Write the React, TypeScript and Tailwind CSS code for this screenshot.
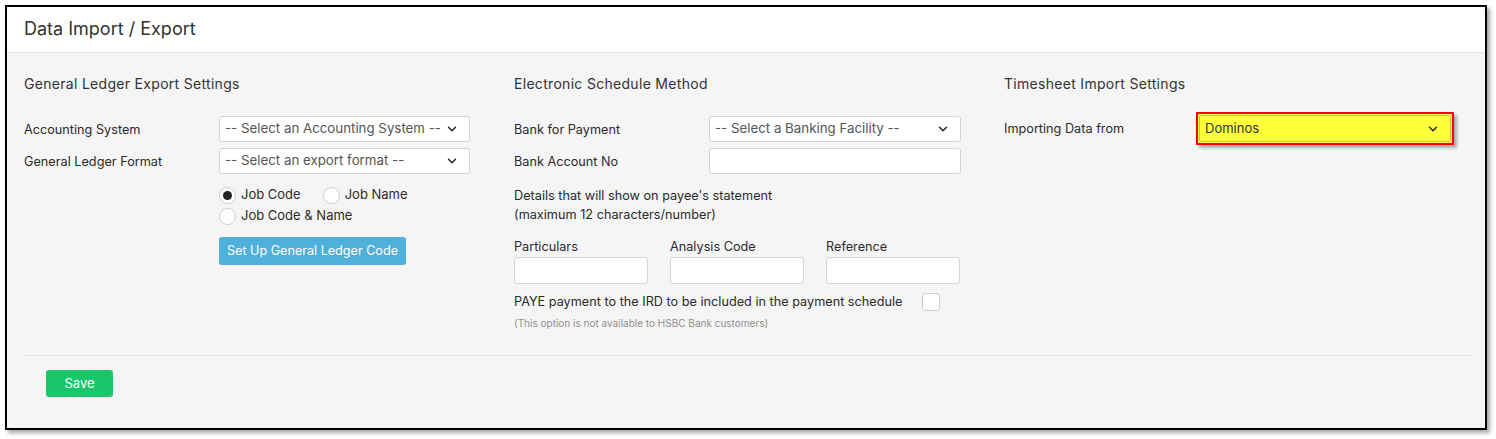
import { ChevronDown } from 'lucide-react';

const font = { fontFamily: 'Inter, "Noto Sans", sans-serif' };

function Select({ text, className = '' }: { text: string; className?: string }) {
  return (
    <div className={`flex h-[26px] items-center justify-between rounded-[3px] border border-[#d4d4d4] bg-white pl-[5px] pr-[10px] text-[13.3px] text-[#555] ${className}`}>
      <span>{text}</span>
      <ChevronDown size={14} strokeWidth={2.5} className="text-[#222]" />
    </div>
  );
}

function Radio({ checked, label }: { checked?: boolean; label: string }) {
  return (
    <label className="flex items-center gap-[5px] text-[13px] text-[#2b2b2b]">
      <span className="flex h-[17px] w-[17px] items-center justify-center rounded-full border border-[#cfcfcf] bg-white">
        {checked && <span className="h-[9px] w-[9px] rounded-full bg-[#222]" />}
      </span>
      {label}
    </label>
  );
}

export default function App() {
  return (
    <div className="h-[439px] w-[1496px] bg-white pl-[5px] pt-[5px]" style={font}>
      <div className="h-[425px] w-[1482px] border-2 border-black bg-[#f5f5f5] shadow-[3px_3px_4px_rgba(0,0,0,0.35)]">
        <header className="flex h-[46px] items-center border-b border-[#e3e3e3] bg-white px-[17px] pb-[2px]">
          <h1 className="text-[18px] text-[#333]">Data Import / Export</h1>
        </header>

        <section className="grid h-[302px] grid-cols-[490px_490px_480px] pl-[17px] pt-[21px] text-[12.7px] text-[#2b2b2b]">
          {/* General ledger */}
          <div>
            <h2 className="text-[14px] leading-5 tracking-[0.3px] text-[#333]">General Ledger Export Settings</h2>
            <div className="mt-[22px] flex items-center">
              <span className="w-[195px] pt-[1px]">Accounting System</span>
              <Select text="-- Select an Accounting System --" className="w-[251px]" />
            </div>
            <div className="mt-[6px] flex items-center">
              <span className="w-[195px] pt-[2px]">General Ledger Format</span>
              <Select text="-- Select an export format --" className="w-[251px]" />
            </div>
            <div className="ml-[195px] mt-[11px] flex flex-col gap-[1px]">
              <div className="flex h-5 items-center gap-[22px]">
                <Radio checked label="Job Code" />
                <Radio label="Job Name" />
              </div>
              <div className="flex h-5 items-center">
                <Radio label="Job Code & Name" />
              </div>
            </div>
            <button
              type="button"
              className="ml-[195px] mt-[11px] h-[28px] w-[187px] rounded-[3px] bg-[#4fb0dc] text-[12.6px] text-white"
            >
              Set Up General Ledger Code
            </button>
          </div>

          {/* Electronic schedule */}
          <div>
            <h2 className="text-[14px] leading-5 tracking-[0.3px] text-[#333]">Electronic Schedule Method</h2>
            <div className="mt-[22px] flex items-center">
              <span className="w-[195px] pt-[1px]">Bank for Payment</span>
              <Select text="-- Select a Banking Facility --" className="w-[252px]" />
            </div>
            <div className="mt-[6px] flex items-center">
              <span className="w-[195px] pt-[2px]">Bank Account No</span>
              <div className="h-[26px] w-[252px] rounded-[3px] border border-[#d4d4d4] bg-white" />
            </div>
            <p className="mt-[12px] leading-[19px]">
              Details that will show on payee's statement
              <br />
              (maximum 12 characters/number)
            </p>
            <div className="mt-[14px] flex gap-[22px]">
              {['Particulars', 'Analysis Code', 'Reference'].map((l) => (
                <div key={l} className="flex flex-col">
                  <span className="leading-[18px]">{l}</span>
                  <div className="mt-[1px] h-[27px] w-[134px] rounded-[3px] border border-[#d4d4d4] bg-white" />
                </div>
              ))}
            </div>
            <div className="mt-[8px] flex h-[19px] items-center">
              <span className="w-[408px]">PAYE payment to the IRD to be included in the payment schedule</span>
              <span className="h-[18px] w-[18px] rounded-[3px] border border-[#cfcfcf] bg-white" />
            </div>
            <p className="mt-[5px] text-[10px] leading-[14px] text-[#8f8f8f]">
              (This option is not available to HSBC Bank customers)
            </p>
          </div>

          {/* Timesheet */}
          <div>
            <h2 className="text-[14px] leading-5 tracking-[0.3px] text-[#333]">Timesheet Import Settings</h2>
            <div className="mt-[18px] flex items-center">
              <span className="w-[192px] pt-[1px]">Importing Data from</span>
              <div className="border-2 border-[#f00] bg-[#ffff3a] p-[1px] shadow-[3px_3px_3px_rgba(0,0,0,0.3)]">
                <div className="flex h-[27px] w-[252px] items-center justify-between rounded-[2px] border border-[#cccc33] bg-[#ffff3a] pl-[5px] pr-[10px] text-[13px] text-[#333]">
                  <span>Dominos</span>
                  <ChevronDown size={14} strokeWidth={2.5} className="text-[#222]" />
                </div>
              </div>
            </div>
          </div>
        </section>

        <footer className="ml-[16px] w-[1450px] border-t border-[#e6e6e6] pl-[23px] pt-[14px]">
          <button type="button" className="h-[27px] w-[67px] rounded-[3px] bg-[#1bc66a] text-[13px] text-white">
            Save
          </button>
        </footer>
      </div>
    </div>
  );
}
